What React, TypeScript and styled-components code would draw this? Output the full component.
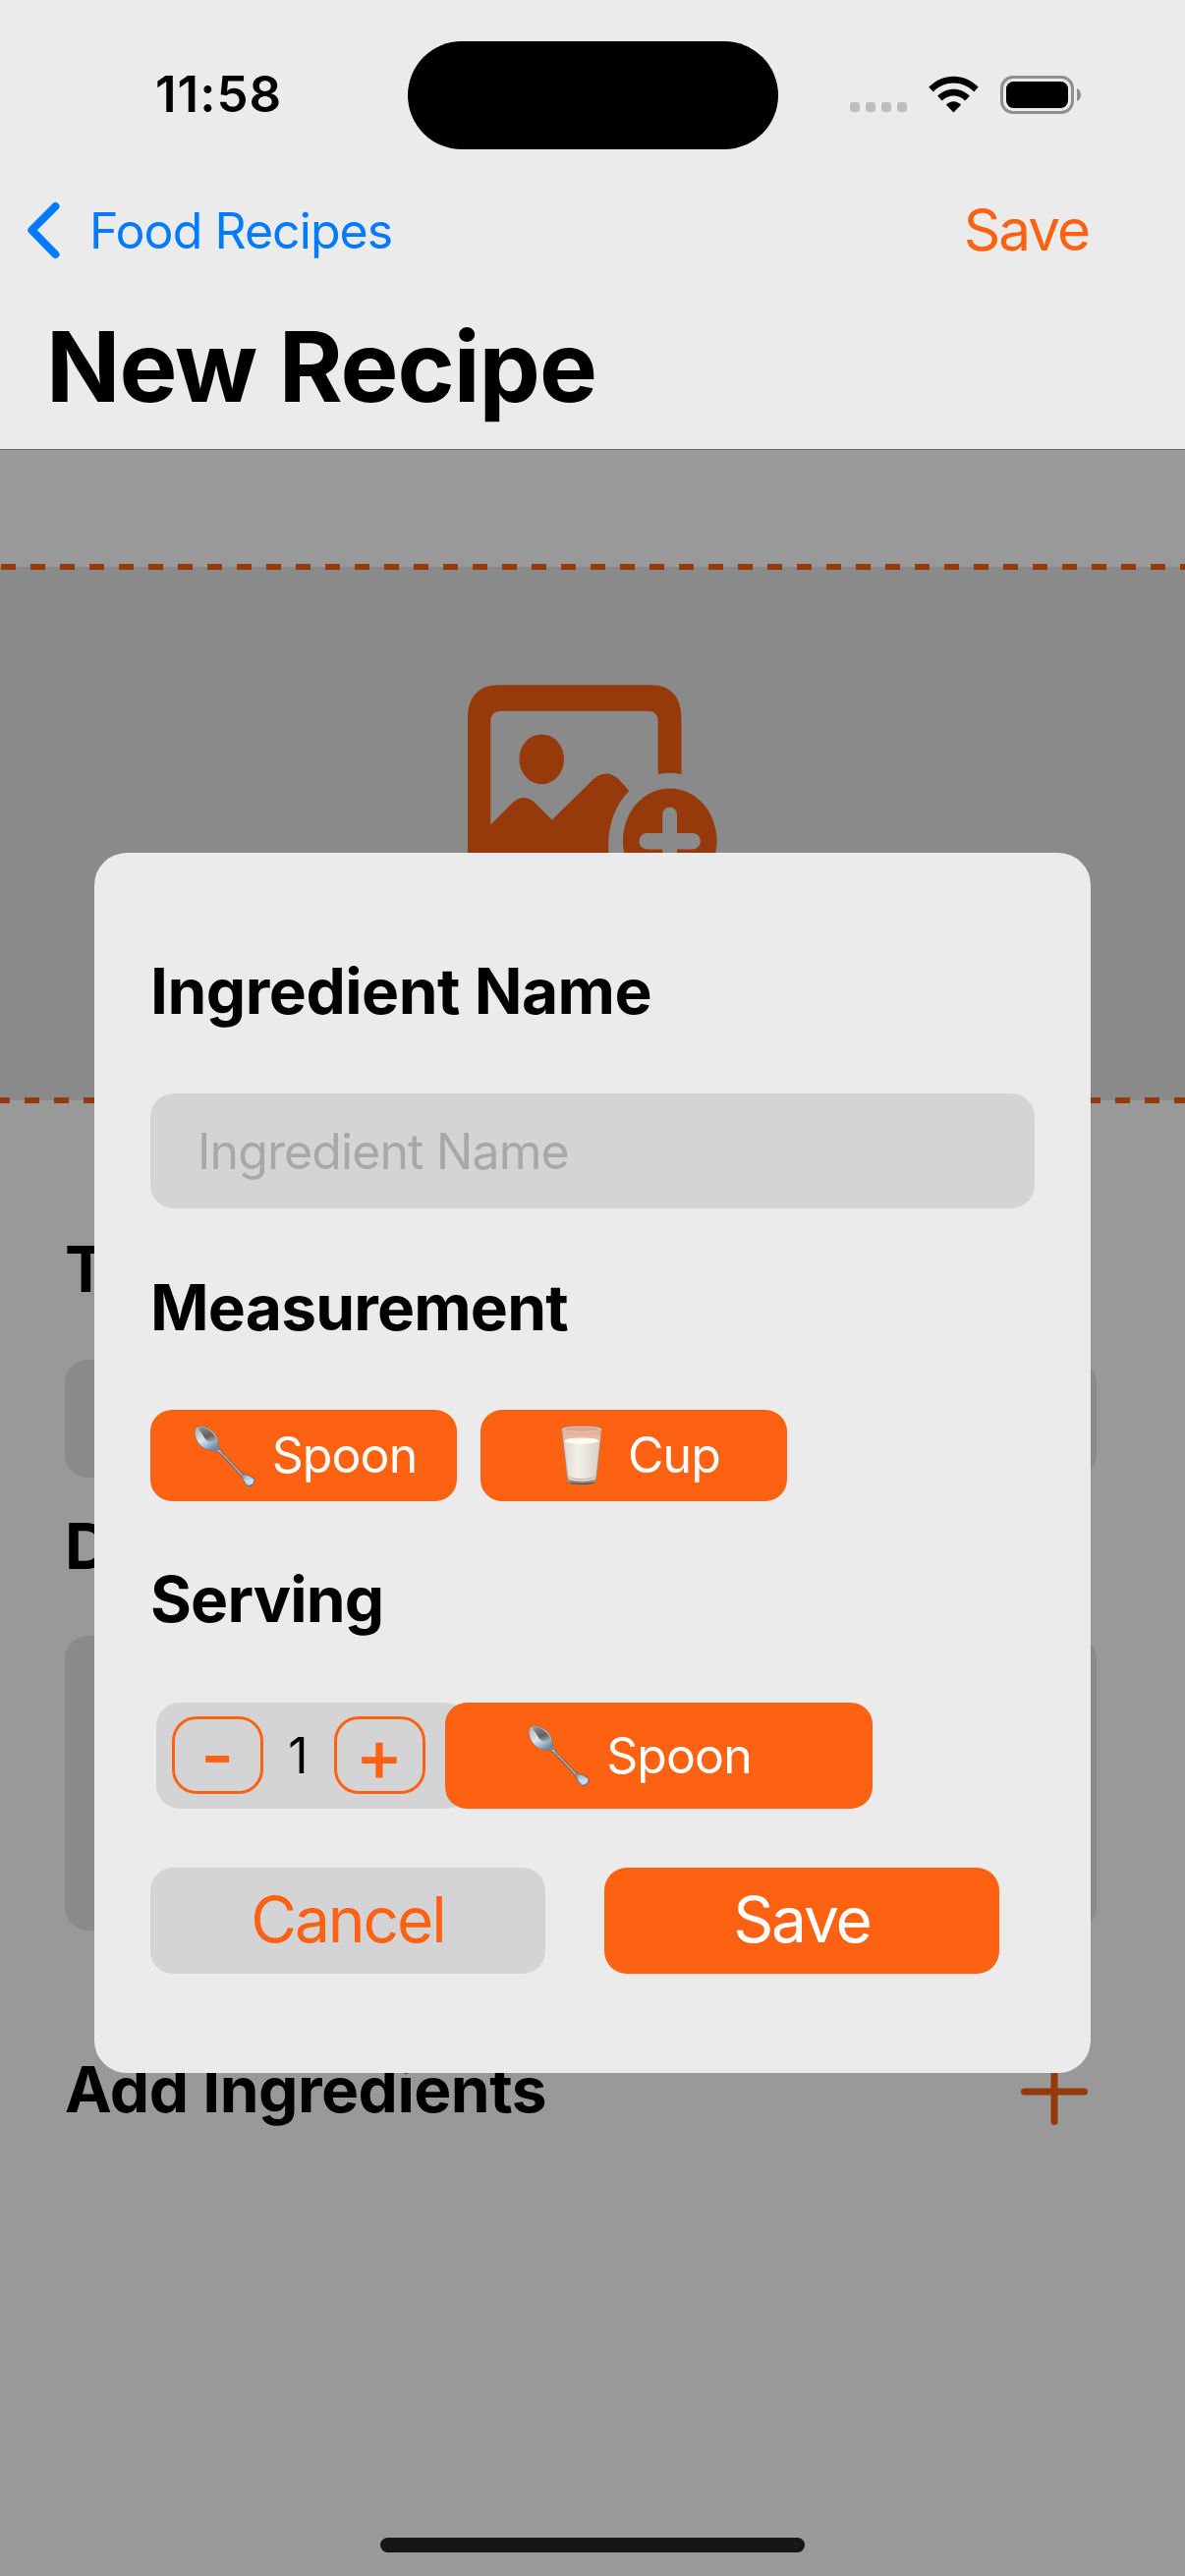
import React from "react";
import styled, { createGlobalStyle } from "styled-components";

const ORANGE = "#fc6212";
const DIM_ORANGE = "#973a0b";
const SURFACE = "#ebebeb";
const FIELD = "#d4d4d6";
const DIM_SURFACE = "#999999";
const DIM_FIELD = "#8a8a8a";

const GlobalStyle = createGlobalStyle`
  *, *::before, *::after { box-sizing: border-box; }
  body {
    margin: 0;
    background: ${DIM_SURFACE};
    font-family: Inter, "Liberation Sans", sans-serif;
    -webkit-font-smoothing: antialiased;
  }
  button { font-family: inherit; padding: 0; border: 0; background: none; }
`;

const Screen = styled.div`
  position: relative;
  width: 1206px;
  height: 2622px;
  overflow: hidden;
  background: ${DIM_SURFACE};
  color: #000;
`;

/* ---------- header ---------- */

const Header = styled.header`
  height: 458px;
  background: ${SURFACE};
  border-bottom: 1px solid #6c6c6c;
`;

const StatusBar = styled.div`
  display: grid;
  grid-template-columns: 415px 377px 1fr;
  align-items: center;
  height: 193px;
`;

const Clock = styled.span`
  padding: 0 0 2px 158px;
  font-size: 51px;
  font-weight: 600;
  line-height: 60px;
  letter-spacing: 1px;
`;

const Island = styled.div`
  height: 110px;
  margin-top: 1px;
  border-radius: 55px;
  background: #000;
`;

const StatusIcons = styled.div`
  display: flex;
  align-items: center;
  height: 40px;
  padding: 0 0 1px 73px;
`;

const SignalDots = styled.div`
  display: flex;
  gap: 6px;
  margin-top: 26px;
  margin-right: 22px;
`;

const Dot = styled.i`
  width: 10px;
  height: 10px;
  border-radius: 3px;
  background: #bdbdbd;
`;

const WifiSvg = styled.svg`
  display: block;
  margin-right: 22px;
`;

const NavRow = styled.nav`
  display: flex;
  align-items: center;
  height: 83px;
  padding: 0 98px 0 26px;
`;

const BackButton = styled.button`
  display: flex;
  align-items: center;
  gap: 30px;
  color: #007aff;
  font-size: 50px;
  line-height: 60px;
  letter-spacing: -0.95px;
`;

const NavSave = styled.button`
  margin-left: auto;
  padding-bottom: 2px;
  color: ${ORANGE};
  font-size: 58.5px;
  line-height: 80px;
  letter-spacing: -2px;
`;

const PageTitle = styled.h1`
  margin: 37px 0 0 47px;
  font-size: 99px;
  font-weight: 700;
  line-height: 120px;
  letter-spacing: -1px;
`;

/* ---------- page behind the dialog ---------- */

const Form = styled.main`
  display: flex;
  flex-direction: column;
  padding-top: 116px;
`;

const DashedEdge = styled.div<{ $start: number; $flip?: boolean }>`
  height: 6px;
  background:
    repeating-linear-gradient(to right, ${DIM_ORANGE} 0 15px, transparent 15px 30px) ${(p) => p.$start}px 0 / 1260px 6px no-repeat,
    linear-gradient(${(p) => (p.$flip ? "to top" : "to bottom")}, ${DIM_SURFACE} 50%, ${DIM_FIELD} 50%);
`;

const PhotoPicker = styled.div`
  display: flex;
  justify-content: center;
  height: 537px;
  padding-top: 117px;
  background: ${DIM_FIELD};
`;

const FormBody = styled.div`
  display: flex;
  flex-direction: column;
  padding: 129px 90px 0 66px;
`;

const Heading = styled.h2<{ $top?: number; $tracking?: number }>`
  margin: ${(p) => p.$top ?? 0}px 0 0;
  font-size: 64px;
  font-weight: 700;
  line-height: 80px;
  letter-spacing: ${(p) => p.$tracking ?? -0.8}px;
  white-space: nowrap;
`;

const DimField = styled.div<{ $top: number; $height: number }>`
  height: ${(p) => p.$height}px;
  margin-top: ${(p) => p.$top}px;
  border-radius: 24px;
  background: ${DIM_FIELD};
`;

const AddRow = styled.div`
  display: flex;
  align-items: center;
  justify-content: space-between;
  margin-top: 122px;
  padding-right: 9px;
`;

const PlusSvg = styled.svg`
  display: block;
  margin-top: 4px;
`;

/* ---------- dialog ---------- */

const Dialog = styled.section`
  position: absolute;
  left: 96px;
  top: 868px;
  width: 1014px;
  height: 1242px;
  padding: 101px 57px 0;
  border-radius: 33px;
  background: ${SURFACE};
`;

const NameInput = styled.input`
  display: block;
  width: 900px;
  height: 117px;
  margin-top: 64px;
  padding: 0 48px;
  border: 0;
  border-radius: 24px;
  background: ${FIELD};
  font-family: inherit;
  font-size: 50px;
  letter-spacing: -0.9px;
  &::placeholder { color: #a8a8aa; opacity: 1; }
`;

const ChipRow = styled.div`
  display: flex;
  gap: 24px;
  margin-top: 64px;
`;

const Chip = styled.button<{ $width: number; $height: number; $left?: number; $right?: number }>`
  display: flex;
  align-items: center;
  justify-content: center;
  width: ${(p) => p.$width}px;
  height: ${(p) => p.$height}px;
  padding: 0 ${(p) => p.$right ?? 0}px 0 ${(p) => p.$left ?? 0}px;
  border-radius: 22px;
  background: ${ORANGE};
  color: #fff;
  font-size: 50px;
  line-height: 60px;
  letter-spacing: -0.9px;
`;

const ChipLabel = styled.span`
  padding-bottom: 1px;
`;

const ChipIcon = styled.svg<{ $gap: number }>`
  display: block;
  flex: none;
  margin-right: ${(p) => p.$gap}px;
`;

const ServingRow = styled.div`
  display: flex;
  margin: 65px 0 0 6px;
`;

const Stepper = styled.div`
  display: flex;
  align-items: center;
  width: 318px;
  height: 108px;
  margin-right: -24px;
  padding: 0 0 1px 15.5px;
  border-radius: 24px;
  background: ${FIELD};
`;

const StepButton = styled.button`
  width: 93px;
  height: 79px;
  border: 3px solid ${ORANGE};
  border-radius: 25px;
  color: ${ORANGE};
  font-size: 74px;
  font-weight: 500;
  line-height: 73px;
`;

const Count = styled.span`
  width: 72px;
  font-size: 50px;
  line-height: 60px;
  text-align: center;
`;

const Actions = styled.div`
  display: flex;
  gap: 60px;
  margin-top: 60px;
`;

const ActionButton = styled.button<{ $primary?: boolean }>`
  width: 402px;
  height: 108px;
  padding-bottom: 2px;
  border-radius: 23px;
  background: ${(p) => (p.$primary ? ORANGE : FIELD)};
  color: ${(p) => (p.$primary ? "#fff" : ORANGE)};
  font-size: 64px;
  line-height: 106px;
  letter-spacing: -2.1px;
`;

const HomeIndicator = styled.div`
  position: absolute;
  left: 387px;
  bottom: 24px;
  width: 432px;
  height: 15px;
  border-radius: 8px;
  background: #161616;
`;

/* ---------- drawings ---------- */

const Wifi = () => (
  <WifiSvg width="51" height="38" viewBox="0 0 51 38">
    <path d="M0.3 11.6 C14.4 -3 36.6 -3 50.7 11.6 L46.2 16.4 C34.6 4.6 16.4 4.6 4.8 16.4 Z" />
    <path d="M9.2 20.7 C18.2 11.4 32.8 11.4 41.8 20.7 L37.2 25.4 C30.8 18.9 20.2 18.9 13.8 25.4 Z" />
    <path d="M18 29.8 C22 25 29 25 33 29.8 L25.5 37.6 Z" />
  </WifiSvg>
);

const Battery = () => (
  <svg width="83" height="39" viewBox="0 0 83 39">
    <rect x="1.5" y="1.5" width="72" height="36" rx="11.5" fill="none" stroke="#8f8f8f" strokeWidth="3" />
    <rect x="6" y="6" width="63" height="27" rx="7.5" />
    <path d="M78 13 C83.3 14.5 83.3 24.5 78 26 Z" fill="#8f8f8f" />
  </svg>
);

const PhotoPlus = () => (
  <svg width="254" height="230" viewBox="476 697 254 230">
    <path
      fill={DIM_ORANGE}
      fillRule="evenodd"
      d="M507 697.3 H662.5 C683 697.3 693.5 710 693.5 731 V788.2 Q681.7 785.5 669.7 788.2 V735 Q669.7 723.7 659.5 723.7 H510 Q499.3 723.7 499.3 735 V839.4 L522 816.8 Q532.3 807.5 543.5 816.2 L561.8 834.6 L603 794 Q616.5 781.5 629.8 793.2 L640.3 805 C617 828 614 868 626 890 V927 H507 C486 927 476 900 476 868 V731 C476 710 487 697.3 507 697.3 Z"
    />
    <ellipse cx="551.2" cy="772.8" rx="22.8" ry="25.4" fill={DIM_ORANGE} />
    <ellipse cx="681.7" cy="856" rx="47.8" ry="53.6" fill={DIM_ORANGE} />
    <rect x="674.2" y="821.6" width="14.8" height="69" rx="7.4" fill={DIM_FIELD} />
    <rect x="650.6" y="848" width="62.2" height="16.4" rx="8" fill={DIM_FIELD} />
  </svg>
);

const Spoon = ({ gap }: { gap: number }) => {
  const id = React.useId();
  return (
    <ChipIcon $gap={gap} width="62" height="62" viewBox="0 0 62 62">
      <defs>
        <linearGradient id={`${id}b`} x1="0.2" y1="0.1" x2="0.75" y2="0.9">
          <stop offset="0" stopColor="#b9bbbd" />
          <stop offset="0.45" stopColor="#dfe6ec" />
          <stop offset="0.75" stopColor="#9dbbd6" />
          <stop offset="1" stopColor="#6f8aa3" />
        </linearGradient>
        <linearGradient id={`${id}c`} x1="0.3" y1="0" x2="0.7" y2="1">
          <stop offset="0" stopColor="#8b8b8c" />
          <stop offset="0.6" stopColor="#5f6062" />
          <stop offset="1" stopColor="#a9a29d" />
        </linearGradient>
        <linearGradient id={`${id}h`} gradientUnits="userSpaceOnUse" x1="24" y1="24" x2="58" y2="58">
          <stop offset="0" stopColor="#a9c3da" />
          <stop offset="0.3" stopColor="#77797b" />
          <stop offset="0.75" stopColor="#8d8884" />
          <stop offset="0.86" stopColor="#b5cde2" />
          <stop offset="1" stopColor="#86a8c6" />
        </linearGradient>
      </defs>
      <path
        d="M22 23 C25 22.5 26.5 25 28 27 L47.5 47.5 C51 50 56 50.5 59.5 53 C63.5 56.5 59.5 62 54.5 61.5 C51 60.5 50 55 46.5 50.5 L26 28.5 C23 26.5 20.5 25 22 23 Z"
        fill={`url(#${id}h)`}
        stroke="#6b5a50"
        strokeWidth="0.8"
      />
      <path
        d="M2 1.8 C9 -2 20.5 5 23.5 13.5 C24.6 17 23.5 20 25.5 23.5 L23 26 C17 24.5 12 25.5 7.5 21.5 C1 16.5 -2 6 2 1.8 Z"
        fill={`url(#${id}b)`}
        stroke="#7b726c"
        strokeWidth="0.7"
      />
      <path d="M4.5 2 C11 0 20 6.5 22 13.5 C22.5 16.5 20 16 18 16.5 C13.5 17 10.5 14 8.5 10 C7.5 7 3.5 5 4.5 2 Z" fill={`url(#${id}c)`} />
      <path d="M30 30.5 L48 50" stroke="#c4c0bb" strokeWidth="1.1" fill="none" />
      <path d="M51.5 57 C54 53.5 57 53 59.8 54.6 C61.5 57.5 57.5 61 54.6 60.2 Z" fill="#c3dcf1" />
    </ChipIcon>
  );
};

const Milk = () => {
  const id = React.useId();
  return (
    <ChipIcon $gap={26} width="42" height="61" viewBox="0 0 42 61">
      <defs>
        <linearGradient id={`${id}g`} x1="0" y1="0" x2="0" y2="1">
          <stop offset="0" stopColor="#d9a48b" />
          <stop offset="0.25" stopColor="#efc0a8" />
          <stop offset="0.85" stopColor="#d8cfc7" />
          <stop offset="1" stopColor="#75685f" />
        </linearGradient>
        <linearGradient id={`${id}m`} x1="0" y1="0" x2="1" y2="0">
          <stop offset="0" stopColor="#dedad0" />
          <stop offset="0.4" stopColor="#f4f1e8" />
          <stop offset="1" stopColor="#d5d1c6" />
        </linearGradient>
      </defs>
      <path d="M0.5 3.5 C6 -0.6 36 -0.6 41.5 3.5 L35.5 57 C32 61.4 10 61.4 6.8 57 Z" fill={`url(#${id}g)`} stroke="#a08475" strokeWidth="0.8" />
      <path d="M3.4 16 C9 12 33 12 38.6 16 L34.6 51.5 C30 55 12.5 55 7.8 51.5 Z" fill={`url(#${id}m)`} />
      <ellipse cx="21" cy="15.6" rx="17.2" ry="3.2" fill="#fdfcf6" />
      <ellipse cx="21" cy="3.7" rx="19.5" ry="2.6" fill="#d8a890" stroke="#e9cfc2" strokeWidth="0.8" />
      <path d="M8 53.5 C13 56.6 29 56.6 34.4 53.5" stroke="#f4eee8" strokeWidth="1.4" fill="none" />
      <path d="M9 58 C14 60 28 60 33.5 58" stroke="#5d524b" strokeWidth="1.2" fill="none" />
    </ChipIcon>
  );
};

export default function App() {
  return (
    <>
      <GlobalStyle />
      <Screen>
        <Header>
          <StatusBar>
            <Clock>11:58</Clock>
            <Island />
            <StatusIcons>
              <SignalDots>
                <Dot />
                <Dot />
                <Dot />
                <Dot />
              </SignalDots>
              <Wifi />
              <Battery />
            </StatusIcons>
          </StatusBar>
          <NavRow>
            <BackButton>
              <svg width="35" height="59" viewBox="0 0 35 59">
                <path d="M30.5 5 L6.3 29.3 L30.5 54" fill="none" stroke="#007aff" strokeWidth="8" strokeLinecap="round" strokeLinejoin="round" />
              </svg>
              Food Recipes
            </BackButton>
            <NavSave>Save</NavSave>
          </NavRow>
          <PageTitle>New Recipe</PageTitle>
        </Header>

        <Form>
          <DashedEdge $start={1} />
          <PhotoPicker>
            <PhotoPlus />
          </PhotoPicker>
          <DashedEdge $start={-5} $flip />
          <FormBody>
            <Heading>T</Heading>
            <DimField $top={52} $height={120} />
            <Heading $top={30}>D</Heading>
            <DimField $top={51} $height={300} />
            <AddRow>
              <Heading $tracking={-0.5}>Add Ingredients</Heading>
              <PlusSvg width="68" height="68" viewBox="0 0 68 68">
                <path d="M3.5 34 H64.5 M34 3.5 V64.5" stroke={DIM_ORANGE} strokeWidth="7" strokeLinecap="round" />
              </PlusSvg>
            </AddRow>
          </FormBody>
        </Form>

        <Dialog>
          <Heading $tracking={-0.5}>Ingredient Name</Heading>
          <NameInput placeholder="Ingredient Name" />
          <Heading $top={61}>Measurement</Heading>
          <ChipRow>
            <Chip $width={312} $height={93} $left={4}>
              <Spoon gap={17} />
              <ChipLabel>Spoon</ChipLabel>
            </Chip>
            <Chip $width={312} $height={93} $left={14}>
              <Milk />
              <ChipLabel>Cup</ChipLabel>
            </Chip>
          </ChipRow>
          <Heading $top={60}>Serving</Heading>
          <ServingRow>
            <Stepper>
              <StepButton>-</StepButton>
              <Count>1</Count>
              <StepButton>+</StepButton>
            </Stepper>
            <Chip $width={435} $height={108} $right={38}>
              <Spoon gap={17} />
              <ChipLabel>Spoon</ChipLabel>
            </Chip>
          </ServingRow>
          <Actions>
            <ActionButton>Cancel</ActionButton>
            <ActionButton $primary>Save</ActionButton>
          </Actions>
        </Dialog>
        <HomeIndicator />
      </Screen>
    </>
  );
}
